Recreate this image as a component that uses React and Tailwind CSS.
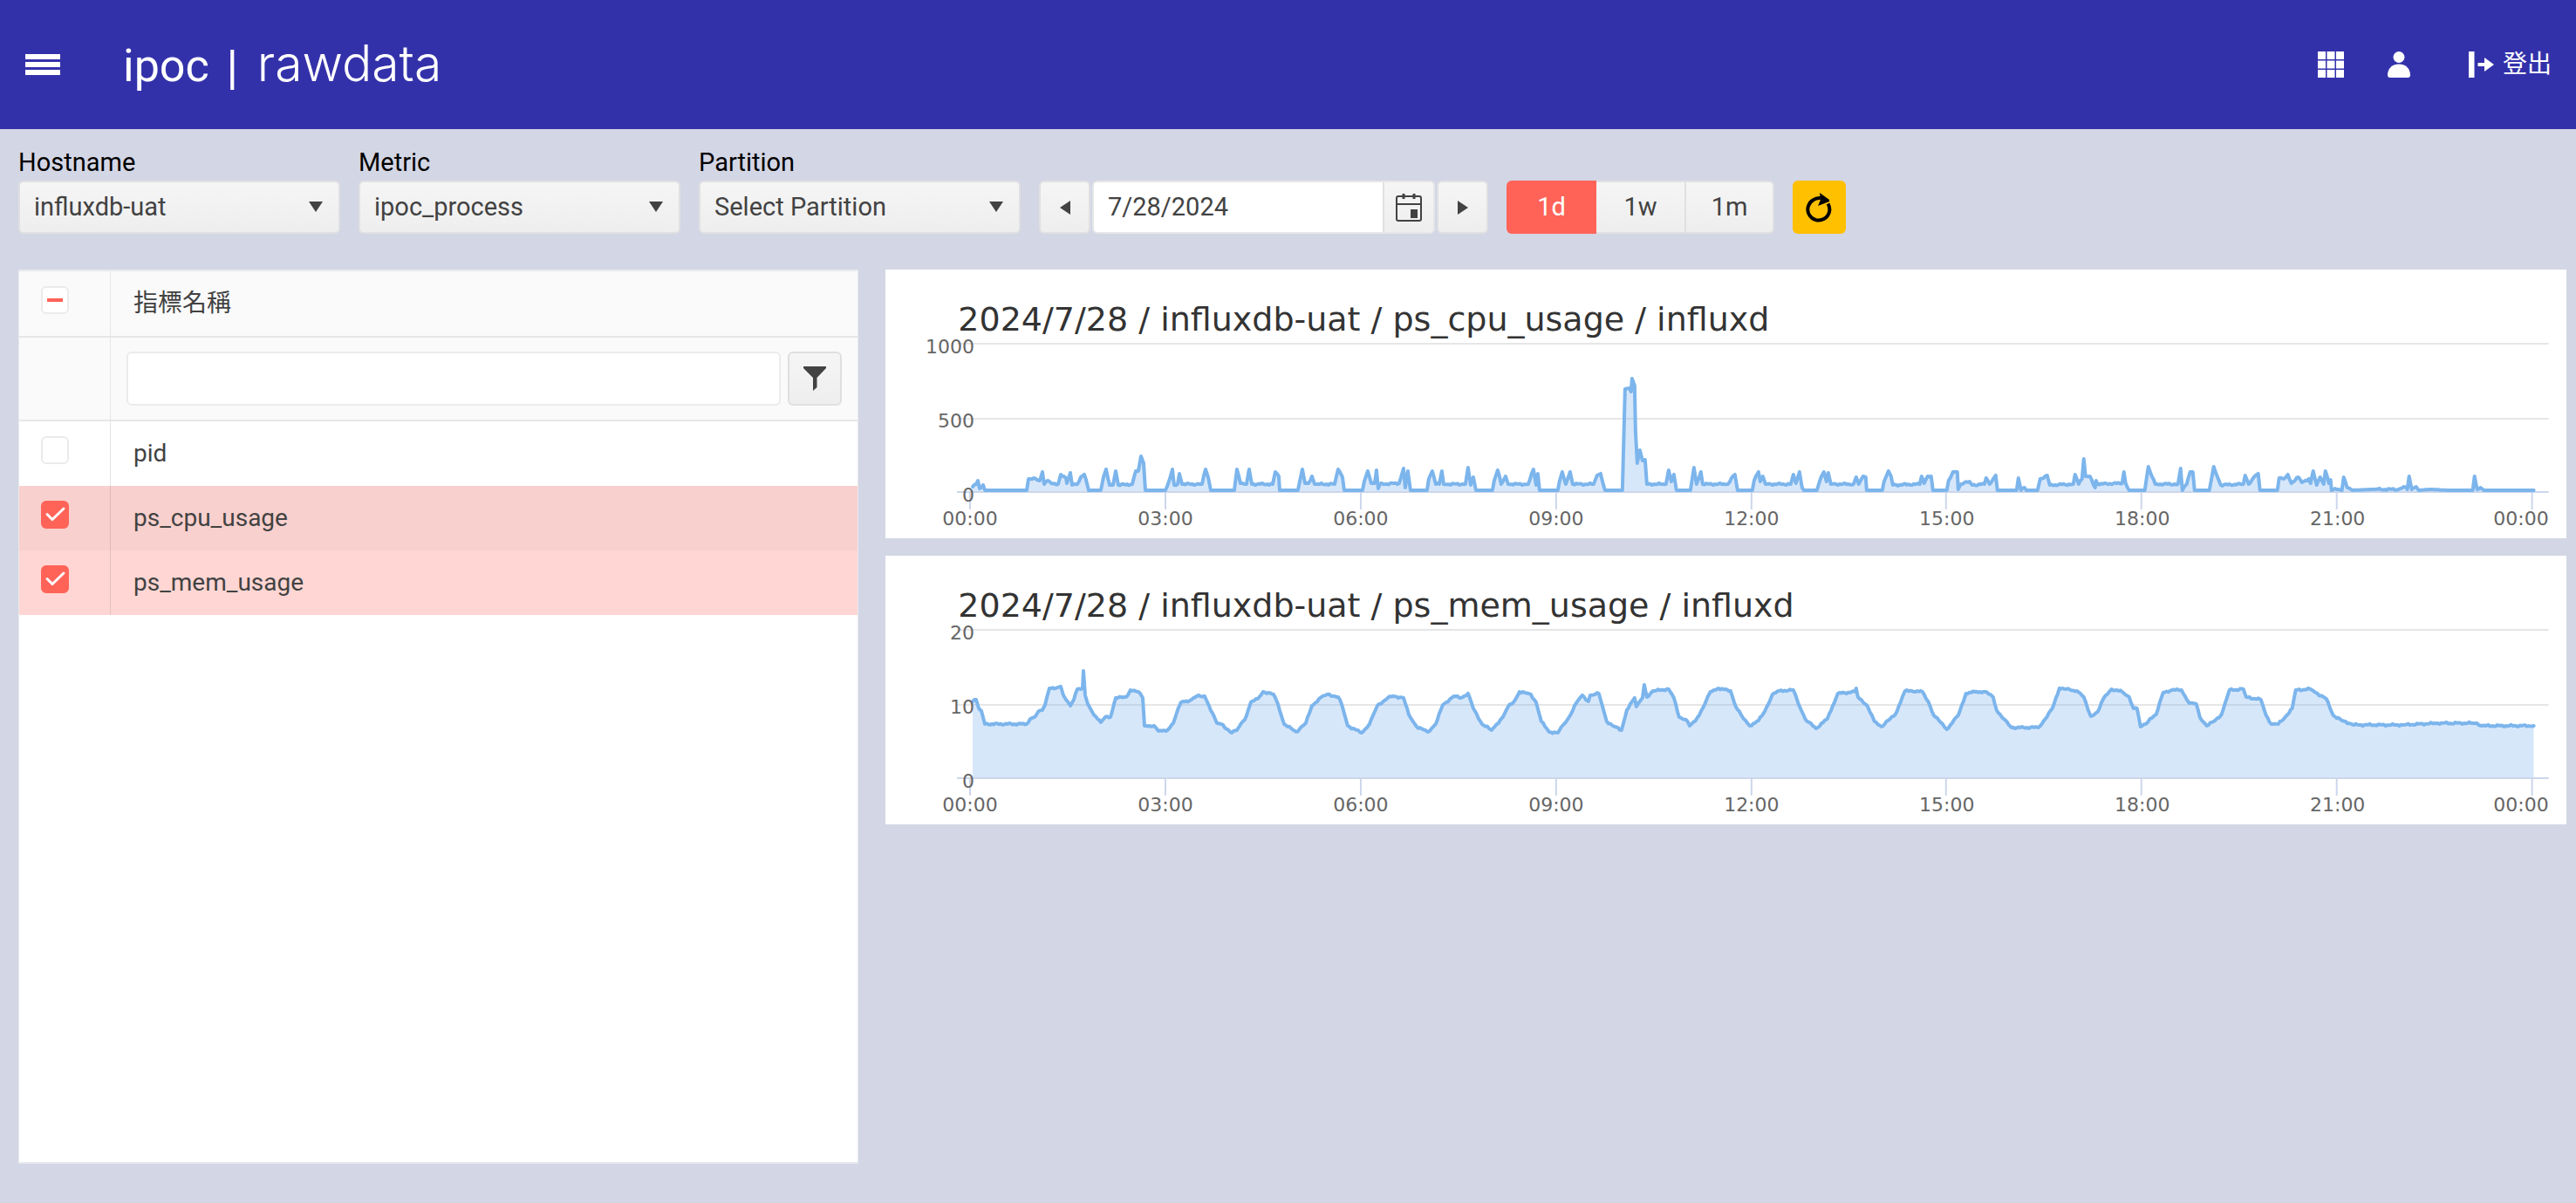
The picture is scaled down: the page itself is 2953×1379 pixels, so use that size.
import { useEffect, useRef } from "react";

const CONTROL =
  "h-[61px] rounded-md border-2 border-[#e0e0e3] bg-linear-to-b from-[#f5f5f5] to-[#eeeeee] text-[#424242]";

// Each pair is [distance from the left of the plot, height above the axis].
const CPU = [
  [0, 6], [4, 9], [6, 13], [8, 4], [10, 5], [12, 8], [14, 2], [62, 2], [64, 15], [70, 16], [77, 13], [80, 23],
  [82, 9], [86, 13], [90, 10], [98, 9], [101, 20], [107, 16], [108, 10], [112, 22], [114, 8], [120, 9], [124, 17],
  [128, 20], [130, 14], [133, 2], [147, 2], [150, 17], [153, 26], [157, 8], [161, 8], [164, 24], [167, 8], [183, 9],
  [187, 24], [190, 24], [193, 41], [196, 33], [198, 2], [221, 2], [226, 15], [229, 26], [231, 8], [235, 9],
  [237, 21], [240, 9], [263, 9], [267, 26], [270, 17], [273, 2], [300, 2], [303, 26], [307, 10], [314, 9],
  [317, 26], [320, 9], [344, 9], [347, 23], [351, 18], [352, 2], [373, 2], [375, 12], [378, 26], [381, 10],
  [385, 10], [389, 18], [392, 9], [415, 9], [419, 26], [424, 17], [426, 2], [447, 2], [449, 12], [453, 24],
  [457, 10], [461, 10], [463, 25], [465, 4], [467, 9], [489, 10], [494, 27], [496, 5], [499, 24], [502, 2],
  [521, 2], [523, 15], [527, 24], [531, 9], [535, 9], [538, 24], [540, 9], [565, 9], [568, 28], [571, 8],
  [574, 17], [577, 2], [596, 2], [598, 13], [602, 25], [606, 9], [611, 18], [614, 9], [637, 9], [643, 26],
  [646, 8], [648, 21], [650, 2], [671, 2], [673, 13], [676, 23], [680, 9], [685, 23], [688, 9], [712, 9],
  [716, 19], [720, 21], [725, 2], [745, 2], [748, 118], [753, 119], [755, 115], [756, 130], [759, 122],
  [760, 70], [762, 33], [765, 48], [768, 36], [771, 37], [773, 9], [795, 9], [798, 25], [801, 12], [804, 20],
  [807, 2], [823, 2], [825, 15], [827, 28], [830, 9], [835, 23], [837, 9], [866, 9], [870, 16], [874, 20],
  [877, 2], [894, 2], [896, 13], [901, 23], [903, 12], [906, 18], [909, 9], [938, 9], [941, 20], [944, 10],
  [948, 23], [951, 5], [953, 2], [968, 2], [971, 12], [976, 23], [979, 12], [981, 22], [984, 9], [1010, 9],
  [1013, 17], [1016, 9], [1021, 18], [1024, 17], [1025, 2], [1043, 2], [1045, 12], [1050, 24], [1053, 18],
  [1055, 8], [1086, 9], [1088, 18], [1091, 10], [1095, 18], [1099, 18], [1101, 2], [1117, 2], [1119, 13],
  [1124, 23], [1129, 23], [1130, 3], [1133, 9], [1143, 12], [1146, 8], [1160, 9], [1162, 16], [1166, 9],
  [1173, 19], [1175, 2], [1197, 2], [1199, 16], [1202, 2], [1206, 5], [1208, 2], [1221, 2], [1224, 15],
  [1228, 16], [1232, 19], [1235, 8], [1262, 9], [1264, 20], [1268, 9], [1272, 15], [1274, 38], [1276, 18],
  [1281, 18], [1287, 5], [1288, 13], [1290, 9], [1318, 10], [1320, 23], [1322, 10], [1326, 2], [1344, 2],
  [1348, 29], [1352, 18], [1356, 9], [1382, 9], [1385, 27], [1387, 2], [1392, 9], [1396, 23], [1399, 23],
  [1401, 2], [1418, 2], [1423, 29], [1427, 18], [1431, 8], [1457, 9], [1459, 19], [1463, 9], [1469, 17],
  [1474, 21], [1476, 2], [1496, 2], [1498, 16], [1503, 15], [1508, 20], [1512, 10], [1520, 17], [1524, 11],
  [1532, 15], [1534, 10], [1537, 24], [1541, 8], [1545, 17], [1549, 9], [1551, 24], [1555, 10], [1557, 14],
  [1558, 2], [1562, 4], [1570, 2], [1572, 17], [1576, 5], [1582, 2], [1605, 3], [1635, 3], [1641, 6],
  [1645, 3], [1647, 18], [1650, 3], [1655, 6], [1658, 2], [1672, 3], [1690, 2], [1720, 2], [1722, 18],
  [1725, 3], [1729, 5], [1733, 2], [1790, 2],
];

const MEMORY = [
  [0, 88], [4, 90], [7, 80], [10, 77], [14, 62], [62, 62], [66, 68], [71, 70], [75, 76], [80, 78], [83, 84],
  [88, 103], [98, 104], [101, 105], [104, 95], [107, 90], [112, 83], [116, 90], [120, 102], [126, 103],
  [127, 123], [129, 95], [132, 85], [137, 76], [143, 68], [147, 64], [152, 70], [158, 70], [164, 92],
  [176, 93], [181, 101], [190, 99], [195, 92], [197, 60], [208, 60], [213, 54], [222, 54], [230, 63],
  [234, 75], [239, 87], [249, 89], [257, 94], [266, 94], [271, 83], [280, 63], [285, 62], [297, 52],
  [303, 55], [308, 63], [312, 67], [319, 87], [327, 91], [333, 99], [345, 96], [350, 85], [357, 62],
  [371, 53], [382, 63], [389, 83], [400, 93], [407, 96], [419, 93], [423, 85], [430, 60], [446, 52],
  [455, 62], [464, 83], [476, 92], [482, 94], [494, 92], [500, 73], [509, 59], [522, 53], [531, 62],
  [539, 84], [552, 94], [560, 92], [568, 97], [574, 80], [584, 62], [595, 55], [601, 62], [608, 70],
  [614, 82], [621, 88], [627, 99], [640, 96], [646, 87], [652, 65], [661, 53], [671, 52], [678, 62],
  [684, 70], [692, 86], [699, 95], [706, 88], [708, 95], [718, 97], [727, 65], [734, 60], [744, 55],
  [750, 78], [759, 92], [761, 82], [768, 92], [770, 107], [773, 93], [780, 100], [798, 102], [804, 92],
  [810, 70], [818, 67], [822, 60], [829, 66], [837, 80], [846, 99], [855, 103], [869, 100], [875, 82],
  [884, 68], [891, 60], [901, 66], [908, 76], [917, 96], [925, 100], [941, 101], [950, 78], [955, 67],
  [967, 57], [980, 68], [992, 97], [1012, 99], [1013, 103], [1015, 93], [1025, 84], [1034, 65], [1042, 59],
  [1052, 68], [1058, 73], [1069, 100], [1077, 100], [1089, 99], [1096, 87], [1102, 72], [1108, 66],
  [1117, 56], [1130, 72], [1139, 97], [1149, 99], [1161, 99], [1170, 93], [1174, 78], [1182, 68], [1191, 58],
  [1222, 58], [1230, 68], [1238, 80], [1246, 103], [1254, 102], [1266, 100], [1274, 93], [1279, 78],
  [1282, 71], [1290, 76], [1297, 92], [1306, 102], [1318, 99], [1326, 93], [1331, 80], [1335, 80],
  [1339, 59], [1345, 62], [1350, 68], [1357, 73], [1365, 98], [1375, 101], [1386, 101], [1395, 86],
  [1403, 85], [1407, 70], [1415, 60], [1423, 65], [1432, 73], [1441, 101], [1457, 102], [1460, 93],
  [1477, 90], [1483, 72], [1489, 62], [1497, 62], [1505, 70], [1513, 80], [1517, 101], [1534, 102],
  [1540, 98], [1552, 91], [1560, 72], [1570, 66], [1584, 61], [1640, 61], [1680, 63], [1725, 63],
  [1730, 60], [1790, 60],
];

// Adds the small sample-to-sample ripple between the readings.
function linePath(points, ripple) {
  let out = "";
  let n = 0;
  for (let i = 0; i < points.length; i++) {
    const [x, h] = points[i];
    out += `${i ? "L" : "M"}${100 + x} ${255 - h}`;
    const next = points[i + 1];
    if (!next) break;
    for (let s = x + 2; s < next[0] - 1; s += 2) {
      n++;
      const y = h + ((next[1] - h) * (s - x)) / (next[0] - x);
      const amount = y < 3 ? 0 : ripple;
      const wobble = Math.sin(n * 2.4) * 0.6 + Math.sin(n * 0.9) * 0.6;
      out += `L${100 + s} ${(255 - y - wobble * amount).toFixed(1)}`;
    }
  }
  return out;
}

const HOURS = ["00:00", "03:00", "06:00", "09:00", "12:00", "15:00", "18:00", "21:00", "00:00"];

function Chart({ title, scale, points, ripple }) {
  const line = linePath(points, ripple);
  return (
    <section className="bg-white font-['DejaVu_Sans',sans-serif]">
      <h2 className="pt-[35px] pl-[83px] text-[38px] leading-[44px] text-[#333333]">{title}</h2>
      <svg viewBox="0 79 1927 229" className="block h-auto w-full overflow-visible" role="img" aria-label={title}>
        <path d="M82 85H1907M82 171H1907" stroke="#e6e6e6" strokeWidth="2" />
        <path d={`${line}V255H100Z`} fill="#7caeee" fillOpacity="0.3" />
        <path d="M82 255H1907" stroke="#ccd6eb" strokeWidth="2" />
        {HOURS.map((_, i) => (
          <path key={i} d={`M${97 + i * 224 - (i > 4 ? 1 : 0)} 256v19`} stroke="#ccd6eb" strokeWidth="2" />
        ))}
        <path d={line} fill="none" stroke="#7cb5ec" strokeWidth="4" strokeLinejoin="round" strokeLinecap="round" />
        <g fontSize="22" fill="#666666">
          {scale.map((value, i) => (
            <text key={value} x="102" y={96 + i * 85} textAnchor="end">
              {value}
            </text>
          ))}
          {HOURS.map((hour, i) => (
            <text key={i} x={i === 8 ? 1907 : 97 + i * 224} y="293" textAnchor={i === 8 ? "end" : "middle"}>
              {hour}
            </text>
          ))}
        </g>
      </svg>
    </section>
  );
}

function Dropdown({ id, label, value }) {
  return (
    <div className="flex w-[369px] flex-col gap-[5px]">
      <label htmlFor={id} className="leading-8 text-black">
        {label}
      </label>
      <div className="relative">
        <select id={id} className={`${CONTROL} w-full appearance-none pr-12 pl-4`} defaultValue={value}>
          <option>{value}</option>
        </select>
        <svg viewBox="0 0 16 12" className="pointer-events-none absolute top-6 right-5 h-3 w-4" fill="#424242">
          <path d="M0 0H16L8 12Z" />
        </svg>
      </div>
    </div>
  );
}

function Tick({ label, checked, mixed }) {
  const box = useRef(null);
  useEffect(() => {
    box.current.indeterminate = Boolean(mixed);
  }, [mixed]);
  return (
    <span className="relative block size-8">
      <input
        ref={box}
        type="checkbox"
        aria-label={label}
        defaultChecked={checked}
        className="block size-8 appearance-none rounded-md border-2 border-[#ebebeb] bg-white checked:border-[#ff6358] checked:bg-[#ff6358]"
      />
      <svg viewBox="0 0 32 32" className="pointer-events-none absolute inset-0 size-8" fill="none">
        {mixed && <path d="M7 16H25" stroke="#ff6358" strokeWidth="4" />}
        {checked && <path d="M7 15.500L13 21.500L26 9" stroke="#ffffff" strokeWidth="3" strokeLinecap="round" />}
      </svg>
    </span>
  );
}

const ROWS = [
  { name: "pid", checked: false, tone: "bg-white" },
  { name: "ps_cpu_usage", checked: true, tone: "bg-[#f8d0cd]" },
  { name: "ps_mem_usage", checked: true, tone: "bg-[#ffd6d3]" },
];

export default function App() {
  return (
    <div className="flex min-h-screen flex-col bg-[#d3d6e4] font-['Roboto','Noto_Sans_CJK_TC',sans-serif] text-[28px] text-[#424242]">
      <header className="flex h-[148px] items-center bg-[#3331aa] pr-7 pl-[29px] text-white">
        <button type="button" aria-label="Menu" className="mr-[72px]">
          <svg viewBox="0 0 40 24" className="block h-6 w-10" fill="currentColor">
            <path d="M0 0H40V6H0ZM0 9H40V15H0ZM0 18H40V24H0Z" />
          </svg>
        </button>
        <h1 className="flex items-baseline text-[52px] leading-[60px]">
          <span>ipoc</span>
          <span className="ml-[20px] font-['Liberation_Sans',sans-serif] text-[50px]">|</span>
          <span className="ml-[22px] font-['Inter',sans-serif] text-[57px] font-light">rawdata</span>
        </h1>
        <nav className="ml-auto flex items-center">
          <button type="button" aria-label="Apps" className="mr-[50px]">
            <svg viewBox="0 0 30 30" className="block size-[30px]" fill="currentColor">
              <path d="M0 0H9V9H0ZM10.500 0H19.500V9H10.500ZM21 0H30V9H21ZM0 10.500H9V19.500H0ZM10.500 10.500H19.500V19.500H10.500ZM21 10.500H30V19.500H21ZM0 21H9V30H0ZM10.500 21H19.500V30H10.500ZM21 21H30V30H21Z" />
            </svg>
          </button>
          <button type="button" aria-label="Account" className="mr-[67px]">
            <svg viewBox="0 0 26 30" className="block h-[30px] w-[26px]" fill="currentColor">
              <circle cx="13" cy="6.500" r="6.500" />
              <path d="M0 27C0 19 6 14.500 13 14.500S26 19 26 27Q26 30 23 30H3Q0 30 0 27Z" />
            </svg>
          </button>
          <a href="#logout" className="flex items-center gap-[10px]">
            <svg viewBox="0 0 29 30" className="block h-[30px] w-[29px]" fill="currentColor">
              <path d="M0 0H6.500V30H0ZM10.500 13H18V7L29 15L18 23V17H10.500Z" />
            </svg>
            登出
          </a>
        </nav>
      </header>

      <main className="flex flex-1 flex-col pt-[22px] pr-[11px] pb-[45px] pl-[21px]">
        <div className="flex flex-wrap items-end gap-[21px] text-[29px]">
          <Dropdown id="hostname" label="Hostname" value="influxdb-uat" />
          <Dropdown id="metric" label="Metric" value="ipoc_process" />
          <Dropdown id="partition" label="Partition" value="Select Partition" />
          <div className="flex gap-[2px]">
            <button type="button" aria-label="Previous day" className={`${CONTROL} grid w-[59px] place-items-center`}>
              <svg viewBox="0 0 12 16" className="h-4 w-3" fill="currentColor">
                <path d="M12 0V16L0 8Z" />
              </svg>
            </button>
            <div className="flex h-[61px] w-[393px] overflow-hidden rounded-md border-2 border-[#e6e6e9] bg-white">
              <input aria-label="Date" defaultValue="7/28/2024" className="min-w-0 flex-1 px-4" />
              <button
                type="button"
                aria-label="Open calendar"
                className="grid w-[58px] place-items-center border-l-2 border-[#e0e0e3] bg-linear-to-b from-[#f5f5f5] to-[#eeeeee]"
              >
                <svg viewBox="0 0 30 32" className="h-8 w-[30px]" fill="none" stroke="currentColor" strokeWidth="2">
                  <rect x="1" y="3" width="28" height="28" rx="2" />
                  <path d="M1 12H29" />
                  <path d="M9 0V6M21 0V6" strokeWidth="3" />
                  <rect x="18" y="19" width="6" height="8" fill="currentColor" />
                </svg>
              </button>
            </div>
            <button type="button" aria-label="Next day" className={`${CONTROL} grid w-[59px] place-items-center`}>
              <svg viewBox="0 0 12 16" className="h-4 w-3" fill="currentColor">
                <path d="M0 0V16L12 8Z" />
              </svg>
            </button>
          </div>
          <div className="flex h-[61px]" role="group" aria-label="Range">
            <button type="button" aria-pressed="true" className="w-[103px] rounded-l-md bg-[#ff6358] text-white">
              1d
            </button>
            <button
              type="button"
              className="w-[103px] border-y-2 border-r-2 border-[#e0e0e3] bg-linear-to-b from-[#f5f5f5] to-[#eeeeee]"
            >
              1w
            </button>
            <button
              type="button"
              className="w-[101px] rounded-r-md border-y-2 border-r-2 border-[#e0e0e3] bg-linear-to-b from-[#f5f5f5] to-[#eeeeee]"
            >
              1m
            </button>
          </div>
          <button
            type="button"
            aria-label="Reload"
            className="grid h-[61px] w-[61px] place-items-center rounded-md bg-[#ffc000] text-black"
          >
            <svg viewBox="0 0 32 34" className="h-[34px] w-8" fill="none">
              <path d="M25.500 12.500A12.500 12.500 0 1 1 9 8Q12 5.500 17 6" stroke="currentColor" strokeWidth="4" />
              <path d="M16 0L27 8V10L14 15L17 8Z" fill="currentColor" />
            </svg>
          </button>
        </div>

        <div className="mt-[41px] grid flex-1 grid-cols-[1fr_2fr] gap-[31px]">
          <div className="border-x border-y-2 border-[#e8e9ee] bg-white">
            <table className="w-full table-fixed border-separate border-spacing-0 text-left">
              <thead className="bg-[#fafafa]">
                <tr className="h-[76px]">
                  <th className="w-[105px] border-r border-b-2 border-black/8 pt-[17px] pl-[25px] align-top font-normal">
                    <Tick label="Select all" mixed />
                  </th>
                  <th className="border-b-2 border-black/8 px-[26px] font-normal">指標名稱</th>
                </tr>
                <tr className="h-24">
                  <td className="border-r border-b-2 border-black/8" />
                  <td className="border-b-2 border-black/8 px-[18px]">
                    <div className="flex gap-2">
                      <input
                        aria-label="指標名稱"
                        className="h-[62px] min-w-0 flex-1 rounded-md border-2 border-[#ebebeb] bg-white px-4"
                      />
                      <button
                        type="button"
                        aria-label="Filter"
                        className="grid size-[62px] place-items-center rounded-md border-2 border-[#dfdfdf] bg-linear-to-b from-[#f5f5f5] to-[#eeeeee]"
                      >
                        <svg viewBox="0 0 26 28" className="h-7 w-[26px]" fill="currentColor">
                          <path d="M0 0H26V2L15.500 13V24L11 28V13L0 2Z" />
                        </svg>
                      </button>
                    </div>
                  </td>
                </tr>
              </thead>
              <tbody>
                {ROWS.map((row) => (
                  <tr key={row.name} className={`h-[74px] ${row.tone}`}>
                    <td className="border-r border-black/10 pt-[17px] pl-[25px] align-top">
                      <Tick label={row.name} checked={row.checked} />
                    </td>
                    <td className="px-[26px]">{row.name}</td>
                  </tr>
                ))}
              </tbody>
            </table>
          </div>
          <div className="flex flex-col gap-5">
            <Chart
              title="2024/7/28 / influxdb-uat / ps_cpu_usage / influxd"
              scale={["1000", "500", "0"]}
              points={CPU}
              ripple={1}
            />
            <Chart
              title="2024/7/28 / influxdb-uat / ps_mem_usage / influxd"
              scale={["20", "10", "0"]}
              points={MEMORY}
              ripple={1}
            />
          </div>
        </div>
      </main>
    </div>
  );
}
